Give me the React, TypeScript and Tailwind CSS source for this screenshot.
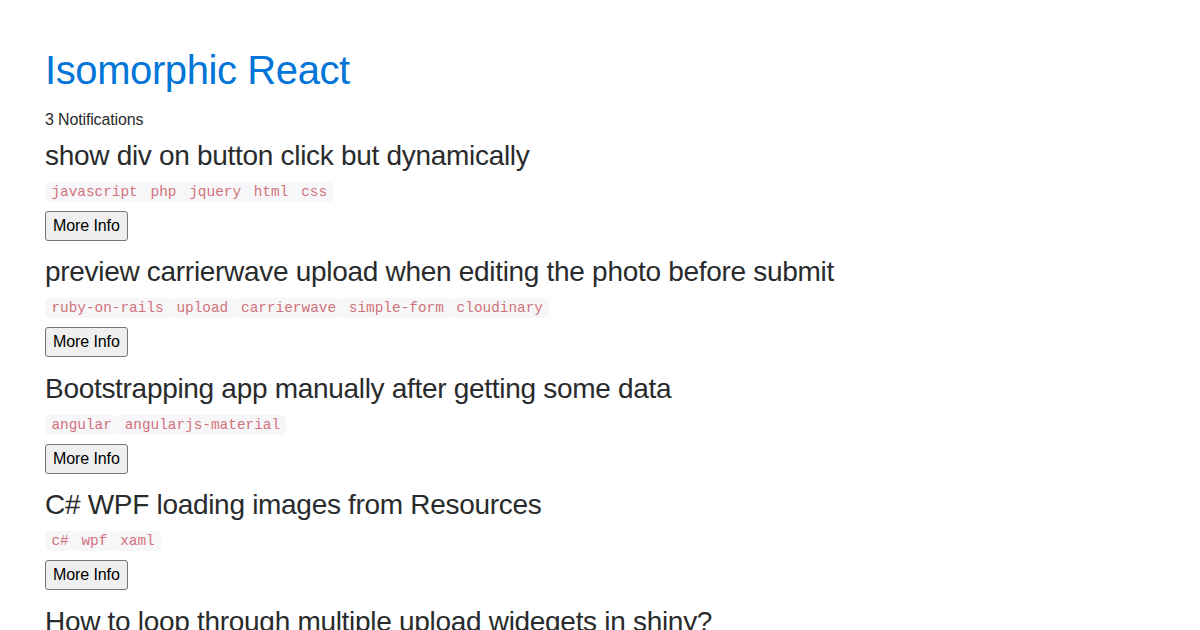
import React from 'react';

const questions = [
  {
    title: 'show div on button click but dynamically',
    tags: ['javascript', 'php', 'jquery', 'html', 'css'],
  },
  {
    title: 'preview carrierwave upload when editing the photo before submit',
    tags: ['ruby-on-rails', 'upload', 'carrierwave', 'simple-form', 'cloudinary'],
  },
  {
    title: 'Bootstrapping app manually after getting some data',
    tags: ['angular', 'angularjs-material'],
  },
  {
    title: 'C# WPF loading images from Resources',
    tags: ['c#', 'wpf', 'xaml'],
  },
  {
    title: 'How to loop through multiple upload widegets in shiny?',
    tags: ['r', 'shiny'],
  },
];

const App = () => {
  return (
    <div className="min-h-screen bg-white text-[#292b2c] font-['Liberation_Sans',Arial,sans-serif] text-[16px] leading-[1.5]">
      <div className="max-w-[1140px] mx-auto px-[15px] pt-[48px]">
        <h1 className="text-[40px] leading-[1.1] text-[#0275d8] tracking-[-0.4px] mb-[16px]">
          Isomorphic React
        </h1>
        <div className="text-[16px] tracking-[-0.15px] mb-[9px]">3 Notifications</div>
        {questions.map((q, index) => (
          <div key={index} className="mb-[16.7px]">
            <h3 className="text-[28px] leading-[1.1] tracking-[-0.3px] mb-[6px]">{q.title}</h3>
            <div className="flex pt-[4px] mb-[9px] h-[24px]">
              {q.tags.map((tag) => (
                <code
                  key={tag}
                  className="block h-[20px] px-[6.4px] py-[2px] text-[14.4px] leading-[16px] text-[#d2727b] bg-[#f7f7f9] rounded-[4px] font-['Liberation_Mono','Courier_New',monospace]"
                >
                  {tag}
                </code>
              ))}
            </div>
            <button className="h-[30px] px-[7px] border border-[#767676] rounded-[3px] bg-[#efefef] text-black text-[16px] leading-[24px] tracking-[-0.1px]">
              More Info
            </button>
          </div>
        ))}
      </div>
    </div>
  );
};

export default App;
